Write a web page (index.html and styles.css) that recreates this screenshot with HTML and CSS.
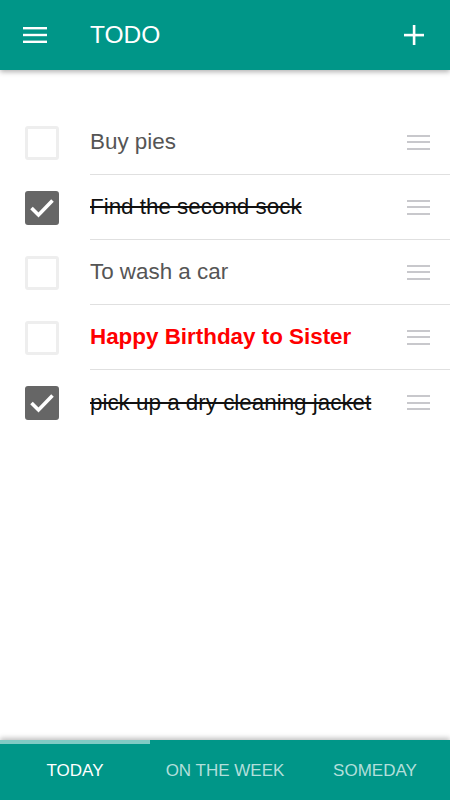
FILE: index.html
```html
<!DOCTYPE html>
<html lang="en">
<head>
  <meta charset="UTF-8">
  <title>TODO</title>
  <meta name="viewport" content="width=device-width, initial-scale=1">
  <link rel="stylesheet" href="styles.css">
</head>
<body>
  <div class="app">
    <header class="toolbar">
      <svg class="menu-icon" width="24" height="18" viewBox="0 0 24 18">
        <rect x="0" y="1" width="24" height="2.4" fill="#fff"/>
        <rect x="0" y="7.8" width="24" height="2.4" fill="#fff"/>
        <rect x="0" y="14.6" width="24" height="2.4" fill="#fff"/>
      </svg>
      <h1>TODO</h1>
      <svg class="add-icon" width="20" height="20" viewBox="0 0 20 20">
        <rect x="8.8" y="0" width="2.6" height="20" fill="#fff"/>
        <rect x="0" y="8.8" width="20" height="2.6" fill="#fff"/>
      </svg>
    </header>

    <main class="list">
      <div class="item">
        <span class="check"></span>
        <div class="item-body">
          <span class="text">Buy pies</span>
          <span class="handle"><i></i><i></i><i></i></span>
        </div>
      </div>
      <div class="item">
        <span class="check done">
          <svg width="28" height="28" viewBox="0 0 28 28"><path d="M3.5 14 L10.5 21 L24.5 6.5" fill="none" stroke="#fff" stroke-width="3.6"/></svg>
        </span>
        <div class="item-body">
          <span class="text striked">Find the second sock</span>
          <span class="handle"><i></i><i></i><i></i></span>
        </div>
      </div>
      <div class="item">
        <span class="check"></span>
        <div class="item-body">
          <span class="text">To wash a car</span>
          <span class="handle"><i></i><i></i><i></i></span>
        </div>
      </div>
      <div class="item">
        <span class="check"></span>
        <div class="item-body">
          <span class="text urgent">Happy Birthday to Sister</span>
          <span class="handle"><i></i><i></i><i></i></span>
        </div>
      </div>
      <div class="item">
        <span class="check done">
          <svg width="28" height="28" viewBox="0 0 28 28"><path d="M3.5 14 L10.5 21 L24.5 6.5" fill="none" stroke="#fff" stroke-width="3.6"/></svg>
        </span>
        <div class="item-body last">
          <span class="text striked">pick up a dry cleaning jacket</span>
          <span class="handle"><i></i><i></i><i></i></span>
        </div>
      </div>
    </main>

    <nav class="tabs">
      <div class="tab active">TODAY</div>
      <div class="tab">ON THE WEEK</div>
      <div class="tab">SOMEDAY</div>
    </nav>
  </div>
</body>
</html>
```

FILE: styles.css
```css
:root {
  --primary: #009688;
  --indicator: #80cbc4;
  --white: #ffffff;
}

* { box-sizing: border-box; }

body {
  margin: 0;
  font-family: "Liberation Sans", Arial, sans-serif;
  background-color: var(--white);
}

.app {
  height: 800px;
  display: flex;
  flex-direction: column;
}

.toolbar {
  height: 70px;
  background-color: var(--primary);
  display: flex;
  align-items: center;
  padding: 0 26px 0 23px;
  box-shadow: 0 2px 5px rgba(0,0,0,0.3);
  position: relative;
  z-index: 1;
}

.menu-icon { display: block; }

.toolbar h1 {
  flex: 1;
  margin: 0 0 0 43px;
  color: var(--white);
  font-size: 24.5px;
  font-weight: normal;
  line-height: 70px;
}

.add-icon { display: block; }

.list {
  flex: 1;
  padding-top: 40px;
}

.item {
  display: flex;
  align-items: center;
  height: 65px;
}

.check {
  width: 34px;
  height: 34px;
  margin: 0 31px 0 25px;
  border: 3px solid #eeeeee;
  border-radius: 3px;
  flex-shrink: 0;
}

.check.done {
  background-color: #666666;
  border-color: #666666;
}

.check svg { display: block; }

.item-body {
  flex: 1;
  height: 100%;
  display: flex;
  align-items: center;
  border-bottom: 1px solid #e0e0e0;
  padding-right: 20px;
}

.item-body.last { border-bottom: none; }

.text {
  flex: 1;
  font-size: 22.4px;
  color: #555555;
}

.text.striked {
  color: #111111;
  text-decoration: line-through;
}

.text.urgent {
  color: #ff0000;
  font-weight: bold;
}

.handle {
  width: 23px;
  display: flex;
  flex-direction: column;
  gap: 4.5px;
}

.handle i {
  display: block;
  height: 2px;
  background-color: #c8c8cc;
}

.tabs {
  height: 60px;
  background-color: var(--primary);
  display: flex;
  box-shadow: 0 -2px 5px rgba(0,0,0,0.25);
}

.tab {
  flex: 1;
  text-align: center;
  font-size: 17px;
  color: #b2dfdb;
  border-top: 4px solid transparent;
  line-height: 54px;
}

.tab.active {
  color: var(--white);
  border-top-color: var(--indicator);
}
```
